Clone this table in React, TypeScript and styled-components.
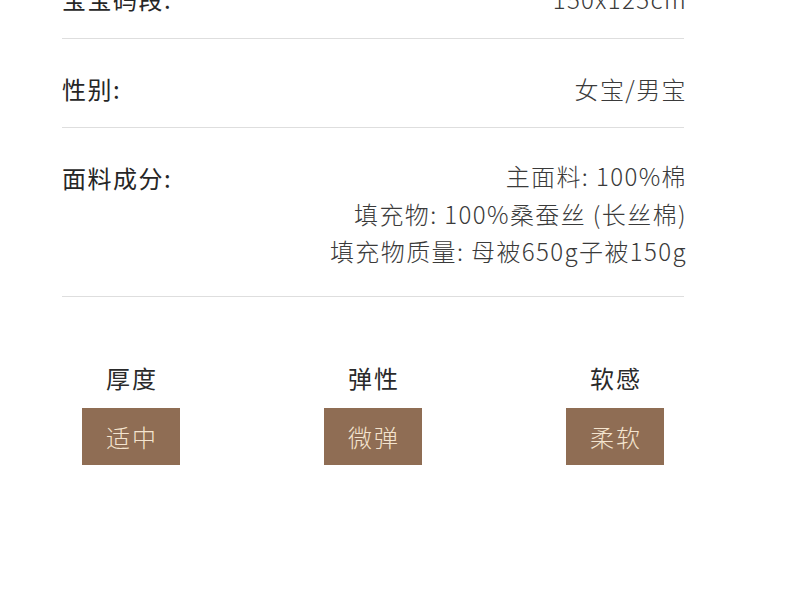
import React from 'react';
import styled, { createGlobalStyle } from 'styled-components';

const GlobalStyle = createGlobalStyle`
  html, body {
    margin: 0;
    padding: 0;
    background: #fff;
    overflow: hidden;
  }
  body {
    font-family: "Noto Sans CJK SC", "Noto Sans", sans-serif;
    color: #222;
  }
`;

const specs = [
  { label: '宝宝码段:', values: ['150x125cm'] },
  { label: '性别:', values: ['女宝/男宝'] },
  {
    label: '面料成分:',
    values: ['主面料: 100%棉', '填充物: 100%桑蚕丝 (长丝棉)', '填充物质量: 母被650g子被150g'],
  },
];

const feels = [
  { title: '厚度', value: '适中' },
  { title: '弹性', value: '微弹' },
  { title: '软感', value: '柔软' },
];

const App = () => (
  <Page>
    <GlobalStyle />
    <SpecList>
      {specs.map((s) => (
        <SpecRow key={s.label}>
          <Label>{s.label}</Label>
          <Values $multi={s.values.length > 1}>
            {s.values.map((v) => (
              <Value key={v}>{v}</Value>
            ))}
          </Values>
        </SpecRow>
      ))}
    </SpecList>
    <FeelGrid>
      {feels.map((f) => (
        <FeelItem key={f.title}>
          <FeelTitle>{f.title}</FeelTitle>
          <Badge>{f.value}</Badge>
        </FeelItem>
      ))}
    </FeelGrid>
  </Page>
);

const Page = styled.div`
  width: 790px;
  height: 600px;
  overflow: hidden;
`;

const SpecList = styled.div`
  margin: -51px 106px 0 62px;
`;

const SpecRow = styled.div`
  display: flex;
  justify-content: space-between;
  align-items: flex-start;
  padding: 31px 0 20px;
  border-bottom: 1px solid #dedede;
`;

const Label = styled.div`
  font-size: 24px;
  line-height: 37px;
  font-weight: 400;
  letter-spacing: 1.5px;
  color: #262626;
`;

const Values = styled.div<{ $multi: boolean }>`
  display: flex;
  flex-direction: column;
  align-items: flex-end;
  margin: ${(p) => (p.$multi ? '-2px 0 6.5px' : '0')};
`;

const Value = styled.div`
  font-size: 24px;
  line-height: 37.5px;
  font-weight: 300;
  letter-spacing: 1.4px;
  margin-right: -3px;
  color: #3a3a3a;
`;

const FeelGrid = styled.div`
  display: grid;
  grid-template-columns: repeat(3, 242px);
  padding: 66px 0 0 10px;
`;

const FeelItem = styled.div`
  display: flex;
  flex-direction: column;
  align-items: center;
  gap: 15px;
`;

const FeelTitle = styled.div`
  font-size: 24px;
  line-height: 30px;
  font-weight: 400;
  letter-spacing: 2px;
  margin-right: -2px;
  color: #2a2a2a;
`;

const Badge = styled.div`
  width: 98px;
  height: 57px;
  display: flex;
  align-items: center;
  justify-content: center;
  background: #8f6d54;
  color: #f4e4cf;
  font-size: 24px;
  font-weight: 300;
  letter-spacing: 2px;
  text-indent: 2px;
`;

export default App;
